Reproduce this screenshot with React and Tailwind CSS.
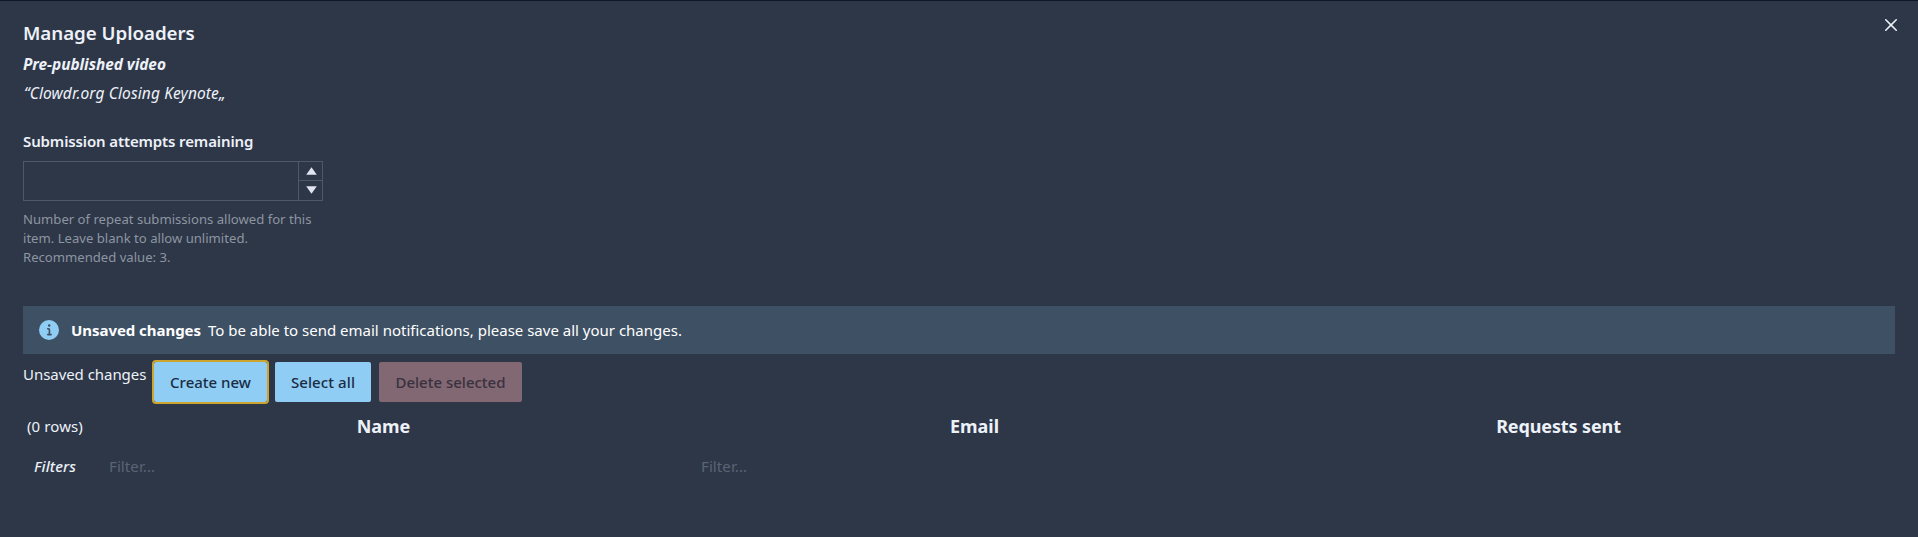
import React from "react";

function CloseIcon() {
  return (
    <svg viewBox="0 0 24 24" className="size-3" fill="currentColor" aria-hidden="true">
      <path d="M.439,21.44a1.5,1.5,0,0,0,2.122,2.121L11.823,14.3a.25.25,0,0,1,.354,0l9.262,9.263a1.5,1.5,0,1,0,2.122-2.121L14.3,12.177a.25.25,0,0,1,0-.354l9.263-9.262A1.5,1.5,0,0,0,21.439.44L12.177,9.7a.25.25,0,0,1-.354,0L2.561.44A1.5,1.5,0,0,0,.439,2.561L9.7,11.823a.25.25,0,0,1,0,.354Z" />
    </svg>
  );
}

function InfoIcon() {
  return (
    <svg viewBox="0 0 24 24" className="size-5 shrink-0 text-[#90cdf4]" fill="currentColor" aria-hidden="true">
      <path d="M12,0A12,12,0,1,0,24,12,12.013,12.013,0,0,0,12,0Zm.25,5a1.5,1.5,0,1,1-1.5,1.5A1.5,1.5,0,0,1,12.25,5ZM14.5,18.5h-4a1,1,0,0,1,0-2h.75a.25.25,0,0,0,.25-.25v-4.5a.25.25,0,0,0-.25-.25H10.5a1,1,0,0,1,0-2h1a2,2,0,0,1,2,2v4.75a.25.25,0,0,0,.25.25h.75a1,1,0,1,1,0,2Z" />
    </svg>
  );
}

function Header() {
  return (
    <header className="flex items-start justify-between">
      <div>
        <h1 className="text-[18.75px] leading-7 font-semibold tracking-[-0.05px]">Manage Uploaders</h1>
        <p className="mt-1.5 text-[15.4px] leading-6 font-bold tracking-[-0.03px] italic">Pre-published video</p>
        <p className="mt-1 pl-px text-[15.5px] leading-6 tracking-[0.12px] italic">“Clowdr.org Closing Keynote„</p>
      </div>
      <button type="button" aria-label="Close" className="-mr-0.5">
        <CloseIcon />
      </button>
    </header>
  );
}

function AttemptsField() {
  return (
    <section className="mt-6 w-[300px]">
      <label htmlFor="attempts" className="block leading-6 font-semibold tracking-[-0.12px] whitespace-nowrap">
        Submission attempts remaining
      </label>
      <div className="mt-2 flex h-10 border border-[#4f5768]">
        <input id="attempts" className="min-w-0 flex-1 bg-transparent px-4 outline-none" />
        <div className="flex w-6 flex-col border-l border-[#4f5768] text-[#dfe4f0]">
          <button type="button" aria-label="Increase" className="flex flex-1 items-center justify-center border-b border-[#4f5768] pl-0.5">
            <svg viewBox="0 0 11 8" className="h-2 w-[11px]" fill="currentColor"><path d="M5.5 0.3 10.8 7.7H.2Z" /></svg>
          </button>
          <button type="button" aria-label="Decrease" className="flex flex-1 items-center justify-center pb-px pl-0.5">
            <svg viewBox="0 0 11 8" className="h-2 w-[11px]" fill="currentColor"><path d="M5.5 7.7.2.3h10.6Z" /></svg>
          </button>
        </div>
      </div>
      <p className="mt-[9px] text-[13.125px] leading-[19px] text-[#8d95a1]">
        Number of repeat submissions allowed for this item. Leave blank to allow unlimited. Recommended value: 3.
      </p>
    </section>
  );
}

function Notice() {
  return (
    <div role="alert" className="mt-[39px] flex h-12 items-center bg-[#3e5064] px-4 text-white">
      <InfoIcon />
      <strong className="ml-3 font-bold tracking-[-0.05px]">Unsaved changes</strong>
      <span className="ml-[7px]">To be able to send email notifications, please save all your changes.</span>
    </div>
  );
}

function Toolbar() {
  return (
    <div className="mt-2 flex h-10 items-start">
      <span className="w-[131px] leading-6 tracking-[-0.05px]">Unsaved changes</span>
      <button type="button" className="h-10 w-[113px] rounded-[2px] bg-[#90cdf4] font-medium text-[#1a2c44] outline-2 outline-[#cba52f]">
        Create new
      </button>
      <button type="button" className="ml-2 h-10 w-24 rounded-[2px] bg-[#90cdf4] font-medium tracking-[0.1px] text-[#1a2c44]">
        Select all
      </button>
      <button type="button" disabled className="ml-2 h-10 w-[143px] rounded-[2px] bg-[#816872] font-medium text-[#3a3140]">
        Delete selected
      </button>
    </div>
  );
}

function UploadersTable() {
  return (
    <div className="mt-3 grid grid-cols-[65px_591px_591px_577px] leading-6">
      <span className="pl-1 tracking-[0.1px]">(0 rows)</span>
      <span className="text-center text-[18px] font-bold">Name</span>
      <span className="text-center text-[18px] font-bold">Email</span>
      <span className="text-center text-[18px] font-bold tracking-[-0.12px]">Requests sent</span>
      <span className="mt-4 pl-[11px] font-medium tracking-[0.1px] italic">Filters</span>
      <input placeholder="Filter..." className="mt-4 h-6 bg-transparent pl-[21px] tracking-[0.1px] outline-none placeholder:text-[#5b6475]" />
      <input placeholder="Filter..." className="mt-4 h-6 bg-transparent pl-[22px] tracking-[0.1px] outline-none placeholder:text-[#5b6475]" />
    </div>
  );
}

export default function App() {
  return (
    <main className="h-[537px] w-full overflow-hidden border-t border-[#10162a] bg-[#2d3748] px-[23px] pt-[18px] font-['Noto_Sans','Open_Sans',sans-serif] text-[15px] text-[#edf1f8]">
      <Header />
      <AttemptsField />
      <Notice />
      <Toolbar />
      <UploadersTable />
    </main>
  );
}
